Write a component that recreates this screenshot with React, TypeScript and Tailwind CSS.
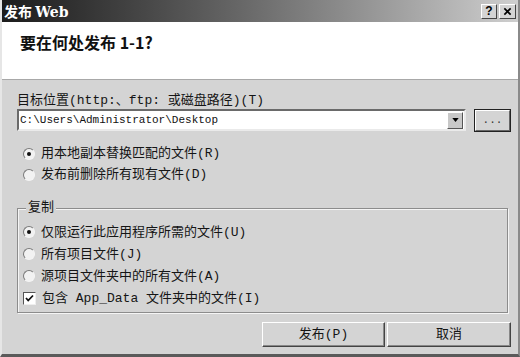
import React from "react";

const F = { fontFamily: "'Liberation Mono','Noto Sans CJK SC',monospace" } as React.CSSProperties;

function Radio({ checked }: { checked?: boolean }) {
  return (
    <span className="relative inline-block w-[12px] h-[12px] shrink-0">
      <span className="absolute inset-0 rounded-full border border-t-[#7a7a7a] border-l-[#7a7a7a] border-r-[#f4f4f4] border-b-[#f4f4f4] bg-[#f2f2f2]" />
      {checked && (
        <span className="absolute left-[4px] top-[4px] w-[4px] h-[4px] rounded-full bg-[#111]" />
      )}
    </span>
  );
}

function Check() {
  return (
    <span className="relative inline-block w-[13px] h-[13px] shrink-0 bg-white border border-t-[#555] border-l-[#555] border-r-[#eee] border-b-[#eee]">
      <svg viewBox="0 0 11 11" className="absolute left-0 top-0 w-[11px] h-[11px]">
        <path d="M2 5 L4.2 7.5 L9 2.5" stroke="#111" strokeWidth="1.8" fill="none" />
      </svg>
    </span>
  );
}

function Row({ children, h = 21 }: { children: React.ReactNode; h?: number }) {
  return (
    <div className="flex items-center gap-[6px] text-[13px] leading-none text-[#151515]" style={{ height: h }}>
      {children}
    </div>
  );
}

export default function App() {
  return (
    <div className="w-[520px] h-[357px] bg-[#d4d4d4] flex flex-col border-l-[2px] border-l-[#e6e6e6] border-r-[2px] border-r-[#8a8a8a] border-b-[3px] border-b-[#5a5a5a] overflow-hidden" style={F}>
      {/* Title bar */}
      <div className="h-[22px] shrink-0 flex items-center justify-between pl-[2px] pr-[2px] bg-gradient-to-r from-[#1c1c1c] via-[#6e6e6e] to-[#cfcfcf]">
        <span className="text-white font-bold text-[14px] leading-none" style={{ fontFamily: "'Noto Sans CJK SC','DejaVu Sans',sans-serif" }}>
          发布 <span style={{ fontFamily: "'DejaVu Serif',serif" }}>Web</span>
        </span>
        <div className="flex gap-[2px]">
          <div className="w-[16px] h-[15px] bg-[#d4d4d4] border border-t-white border-l-white border-r-[#444] border-b-[#444] flex items-center justify-center text-[12px] font-bold leading-none text-black" style={{ fontFamily: "'Liberation Sans',sans-serif" }}>?</div>
          <div className="w-[17px] h-[15px] bg-[#d4d4d4] border border-t-white border-l-white border-r-[#444] border-b-[#444] flex items-center justify-center">
            <svg viewBox="0 0 10 10" className="w-[9px] h-[9px]">
              <path d="M1.5 1.5 L8.5 8.5 M8.5 1.5 L1.5 8.5" stroke="#000" strokeWidth="1.8" />
            </svg>
          </div>
        </div>
      </div>
      {/* Header */}
      <div className="h-[58px] shrink-0 bg-white border-b border-b-[#a8a8a8] pl-[18px] pt-[9px]">
        <div className="text-[16px] font-bold text-[#111] leading-[22px]" style={{ fontFamily: "'Noto Sans CJK SC','Liberation Sans',sans-serif" }}>
          要在何处发布 1-1?
        </div>
      </div>
      {/* Body */}
      <div className="flex-1 flex flex-col pl-[15px] pr-[7px]">
        <div className="mt-[12px] h-[16px] flex items-center text-[13px] leading-none text-[#151515]">
          目标位置(http:、ftp: 或磁盘路径)(T)
        </div>
        <div className="mt-[1px] flex items-start gap-[8px]">
          <div className="w-[449px] h-[22px] bg-white border-2 border-t-[#6a6a6a] border-l-[#6a6a6a] border-r-[#eaeaea] border-b-[#eaeaea] flex items-center">
            <span className="flex-1 pl-[1px] text-[11px] leading-none text-[#111]" style={{ fontFamily: "'Liberation Mono',monospace" }}>
              C:\Users\Administrator\Desktop
            </span>
            <div className="w-[16px] h-[17px] mr-[1px] bg-[#c8c8c8] border border-t-white border-l-white border-r-[#555] border-b-[#555] flex items-center justify-center">
              <svg viewBox="0 0 8 5" className="w-[7px] h-[4px]">
                <path d="M0 0 L8 0 L4 5 Z" fill="#000" />
              </svg>
            </div>
          </div>
          <div className="w-[37px] h-[23px] border border-[#222] bg-[#d4d4d4] flex items-center justify-center">
            <div className="w-full h-full border border-t-white border-l-white border-r-[#666] border-b-[#666] flex items-center justify-center text-[11px] leading-none text-[#333]">
              ...
            </div>
          </div>
        </div>
        <div className="mt-[11px] pl-[6px]">
          <Row><Radio checked /><span>用本地副本替换匹配的文件(R)</span></Row>
          <Row><Radio /><span>发布前删除所有现有文件(D)</span></Row>
        </div>
        {/* Group box */}
        <div className="relative mt-[23px] w-[491px] h-[105px] border border-[#8c8c8c] shadow-[inset_1px_1px_0_#f5f5f5,1px_1px_0_#f5f5f5] pl-[5px] pt-[12px]">
          <span className="absolute left-[8px] top-[-9px] px-[2px] bg-[#d4d4d4] text-[13px] leading-[16px] text-[#151515]">复制</span>
          <Row h={22}><Radio checked /><span>仅限运行此应用程序所需的文件(U)</span></Row>
          <Row h={22}><Radio /><span>所有项目文件(J)</span></Row>
          <Row h={22}><Radio /><span>源项目文件夹中的所有文件(A)</span></Row>
          <Row h={23}><Check /><span>包含 App_Data 文件夹中的文件(I)</span></Row>
        </div>
        {/* Buttons */}
        <div className="mt-[9px] flex justify-end gap-[2px]">
          <div className="w-[123px] h-[25px] bg-[#d4d4d4] border border-t-white border-l-white border-r-[#444] border-b-[#444] shadow-[inset_-1px_-1px_0_#888] flex items-center justify-center text-[13px] leading-none text-[#151515]">
            发布(P)
          </div>
          <div className="w-[124px] h-[25px] bg-[#d4d4d4] border border-t-white border-l-white border-r-[#444] border-b-[#444] shadow-[inset_-1px_-1px_0_#888] flex items-center justify-center text-[13px] leading-none text-[#151515]">
            取消
          </div>
        </div>
      </div>
    </div>
  );
}
